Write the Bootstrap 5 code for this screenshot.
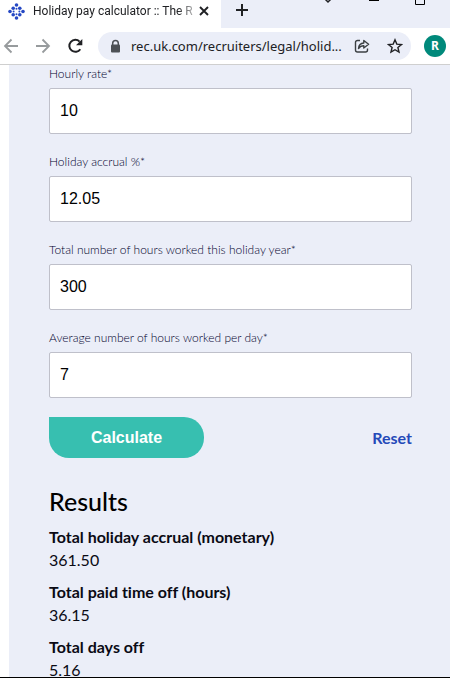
<!DOCTYPE html>
<html lang="en">
<head>
<meta charset="utf-8">
<meta name="viewport" content="width=device-width, initial-scale=1">
<title>Holiday pay calculator</title>
<link href="https://cdn.jsdelivr.net/npm/bootstrap@5.3.0/dist/css/bootstrap.min.css" rel="stylesheet">
<style>
  body { font-family: Lato, sans-serif; font-variant-ligatures: none; color: #0a0a14; background: #fff; }
  .window { border-bottom: 1px solid #000; }
  .chrome { font-family: "Noto Sans", sans-serif; color: #202124; }
  .icon-btn { line-height: 0; color: #202124; }
  .tab-strip { height: 28px; background: #ebeef8; }
  .page-tab { width: 221px; padding: 0 10px 6px 8px; background: #fff; }
  .tab-title { margin-left: 8px; font-family: Roboto, sans-serif; font-size: 12px; line-height: 18px; -webkit-mask-image: linear-gradient(to right, #000 88%, rgba(0,0,0,.2)); mask-image: linear-gradient(to right, #000 88%, rgba(0,0,0,.2)); }
  .win-controls { gap: 34px; }
  .toolbar { height: 37px; padding: 0 4px 0 3px; border-bottom: 1px solid #cfcfcf; }
  .nav-btns { gap: 14px; }
  .address { height: 28px; margin: 0 5px 0 14px; padding: 0 8px 0 11px; gap: 9px; background: #ebeef8; min-width: 0; }
  .address-input { font-size: 13px; line-height: 20px; color: #202124; text-overflow: ellipsis; outline: 0; min-width: 0; }
  .avatar { width: 22px; height: 22px; font-size: 12px; background: #00897b; }
  .panel { margin-left: 9px; padding: 0 38px 0 40px; background: #ebeef8; }
  .field { margin-bottom: 19px; }
  .field-label { font-size: 12px; font-weight: 300; line-height: 18px; margin-bottom: 5px; color: #00002c; }
  .field-input { height: 46px; padding: 0 10px; font-family: "Liberation Sans", sans-serif; font-size: 16px; color: #000; border: 1px solid #bfc0ca; border-radius: 2px; }
  .calc-btn, .calc-btn:hover { height: 41px; width: 155px; font-family: "Liberation Sans", sans-serif; font-size: 16px; font-weight: 700; line-height: 20px; color: #fff; background: #37bfb0; border-radius: 0 20px 20px 20px; }
  .reset-link { font-size: 16px; line-height: 22px; font-weight: 700; color: #2449b8; }
  .results-title { font-size: 25px; line-height: 32px; font-weight: 500; margin: 27px 0 8px; color: #000; }
  .result-list { font-size: 16px; line-height: 23px; }
  .result-list dt { font-weight: 700; }
  .result-list dd { margin-bottom: 9px; }
</style>
<script src="https://cdn.jsdelivr.net/npm/bootstrap@5.3.0/dist/js/bootstrap.bundle.min.js"></script>
</head>
<body>
<div class="window vh-100 d-flex flex-column overflow-hidden">
  <header class="chrome flex-shrink-0">
    <div class="tab-strip d-flex">
      <div class="page-tab d-flex align-items-center flex-shrink-0">
        <svg class="flex-shrink-0" width="17" height="17" viewBox="0 0 17 17" fill="#2548c4" aria-hidden="true">
          <circle cx="8.500" cy="2" r="1.800"/><circle cx="5.200" cy="5.200" r="1.800"/><circle cx="11.800" cy="5.200" r="1.800"/>
          <circle cx="2" cy="8.500" r="1.800"/><circle cx="15" cy="8.500" r="1.800"/>
          <circle cx="5.200" cy="11.800" r="1.800"/><circle cx="11.800" cy="11.800" r="1.800"/><circle cx="8.500" cy="15" r="1.800"/>
          <circle cx="8.500" cy="5.800" r="1"/><circle cx="8.500" cy="11.200" r="1"/><circle cx="5.600" cy="8.500" r="1"/><circle cx="11.400" cy="8.500" r="1"/>
        </svg>
        <span class="tab-title flex-grow-1 text-nowrap overflow-hidden">Holiday pay calculator :: The R</span>
        <button type="button" class="icon-btn btn p-0 border-0" aria-label="Close tab">
          <svg width="14" height="14" viewBox="0 0 14 14" fill="none" stroke="currentColor" stroke-width="1.900"><path d="M3 3l8 8M11 3l-8 8"/></svg>
        </button>
      </div>
      <button type="button" class="icon-btn btn p-0 border-0 ms-2 ps-1 pb-2" aria-label="New tab">
        <svg width="18" height="18" viewBox="0 0 18 18" fill="none" stroke="currentColor" stroke-width="2"><path d="M9 3v12M3 9h12"/></svg>
      </button>
      <div class="win-controls d-flex align-items-start ms-auto pe-4" aria-hidden="true">
        <svg width="12" height="7" viewBox="0 0 12 7" fill="none" stroke="#202124" stroke-width="1.500"><path d="M3 -1l3 3 3-3"/></svg>
        <svg width="12" height="7" viewBox="0 0 12 7"><path d="M1 0h10v1H1z" fill="#000"/></svg>
        <svg width="12" height="7" viewBox="0 0 12 7" fill="none" stroke="#000"><path d="M1.500 -4.500h9v9h-9z"/></svg>
      </div>
    </div>
    <div class="toolbar d-flex align-items-center">
      <div class="nav-btns d-flex">
        <button type="button" class="icon-btn btn p-0 border-0" aria-label="Back"><svg width="18" height="18" viewBox="0 0 18 18" fill="none" stroke="#979b9d" stroke-width="1.800"><path d="M15 9H2M8.500 2.500L2 9l6.500 6.500"/></svg></button>
        <button type="button" class="icon-btn btn p-0 border-0" aria-label="Forward"><svg width="18" height="18" viewBox="0 0 18 18" fill="none" stroke="#979b9d" stroke-width="1.800"><path d="M1 9h13M7.500 2.500L14 9l-6.500 6.500"/></svg></button>
        <button type="button" class="icon-btn btn p-0 border-0" aria-label="Reload"><svg width="17" height="18" viewBox="0 0 17 18"><path d="M13.300 12.200A6 6 0 1 1 12.600 4.600" fill="none" stroke="#202124" stroke-width="2"/><path d="M15.300 2v6.200H9z" fill="#202124"/></svg></button>
      </div>
      <div class="address flex-grow-1 rounded-pill d-flex align-items-center">
        <svg class="flex-shrink-0" width="13" height="15" viewBox="0 0 13 15" aria-hidden="true"><path d="M3.700 6V4.300a2.800 2.800 0 0 1 5.600 0V6" fill="none" stroke="#4d5156" stroke-width="1.500"/><rect x="2" y="5.500" width="9" height="8" rx="1" fill="#4d5156"/></svg>
        <input class="address-input flex-grow-1 border-0 bg-transparent p-0" type="text" aria-label="Address" value="rec.uk.com/recruiters/legal/holid...">
        <button type="button" class="icon-btn btn p-0 border-0" aria-label="Share"><svg width="16" height="16" viewBox="0 0 16 16" fill="none" stroke="#3c4043" stroke-width="1.400" stroke-linejoin="round"><path d="M6 2.500H3.500a2 2 0 0 0-2 2V12a2 2 0 0 0 2 2h8a2 2 0 0 0 2-2v-1.500"/><path d="M4.500 10.500c.3-3.400 2.100-5.300 5.300-5.500V2.500L14.600 6.300 9.800 10V7.700c-2.300 0-4 .9-5.300 2.800z"/></svg></button>
        <button type="button" class="icon-btn btn p-0 border-0 ms-2" aria-label="Bookmark"><svg width="16" height="16" viewBox="0 0 16 16" fill="none" stroke="#202124" stroke-width="1.400"><path d="M8 1.800l1.800 4.300 4.700.4-3.600 3 1.100 4.600L8 11.700l-4 2.400 1.100-4.600-3.600-3 4.700-.4z"/></svg></button>
      </div>
      <button type="button" class="avatar btn p-0 border-0 rounded-circle text-white fw-bold flex-shrink-0 ms-2 lh-1" aria-label="Profile">R</button>
    </div>
  </header>

  <main class="panel flex-grow-1 overflow-hidden">
    <form>
      <div class="field">
        <label class="field-label d-block" for="rate">Hourly rate*</label>
        <input class="field-input form-control" id="rate" type="text" value="10">
      </div>
      <div class="field">
        <label class="field-label d-block" for="accrual">Holiday accrual %*</label>
        <input class="field-input form-control" id="accrual" type="text" value="12.05">
      </div>
      <div class="field">
        <label class="field-label d-block" for="hours">Total number of hours worked this holiday year*</label>
        <input class="field-input form-control" id="hours" type="text" value="300">
      </div>
      <div class="field">
        <label class="field-label d-block" for="daily">Average number of hours worked per day*</label>
        <input class="field-input form-control" id="daily" type="text" value="7">
      </div>
      <div class="d-flex align-items-center justify-content-between">
        <button type="button" class="calc-btn btn border-0 p-0">Calculate</button>
        <a class="reset-link text-decoration-none" href="#">Reset</a>
      </div>
    </form>
    <h2 class="results-title">Results</h2>
    <dl class="result-list mb-0">
      <dt>Total holiday accrual (monetary)</dt>
      <dd>361.50</dd>
      <dt>Total paid time off (hours)</dt>
      <dd>36.15</dd>
      <dt>Total days off</dt>
      <dd class="mb-0">5.16</dd>
    </dl>
  </main>
</div>
</body>
</html>
